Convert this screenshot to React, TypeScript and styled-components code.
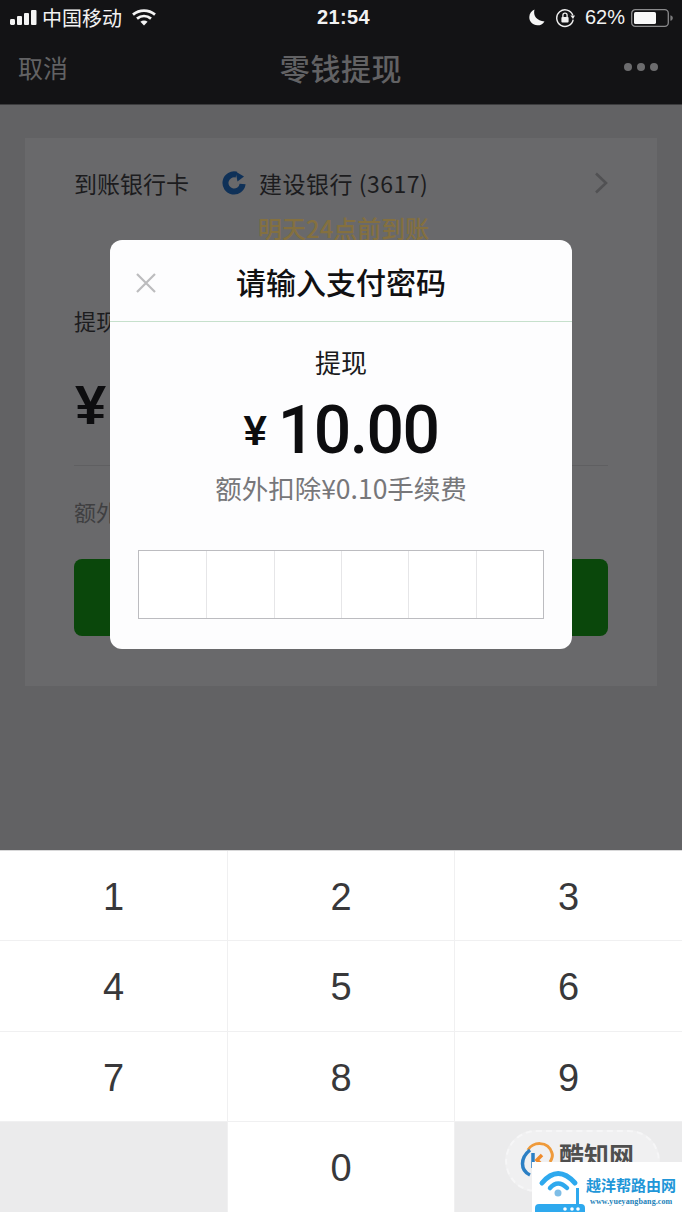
import React from "react";
import styled, { createGlobalStyle } from "styled-components";

const CN = `"Noto Sans CJK SC", "Noto Sans", "Liberation Sans", sans-serif`;

const Global = createGlobalStyle`
  html, body { margin: 0; padding: 0; background: #626264; }
  * { box-sizing: border-box; }
  body { font-family: ${CN}; }
`;

const Page = styled.div`
  position: relative;
  width: 682px;
  height: 1212px;
  overflow: hidden;
  display: flex;
  flex-direction: column;
`;

const TopBar = styled.header`
  height: 105px;
  background: #131315;
  border-bottom: 1px solid #3c3c3e;
  display: flex;
  flex-direction: column;
`;

const StatusBar = styled.div`
  height: 35px;
  padding: 0 9px 0 10px;
  display: grid;
  grid-template-columns: 1fr auto 1fr;
  align-items: center;
  color: #f2f2f2;
`;

const StatusLeft = styled.div`
  display: flex;
  align-items: center;
  gap: 5px;
  font-size: 20px;
  line-height: 24px;
`;

const StatusRight = styled.div`
  display: flex;
  align-items: center;
  justify-content: flex-end;
  gap: 10px;
  font-size: 20px;
  font-family: "Liberation Sans", sans-serif;
`;

const Percent = styled.span`
  margin-right: -4px;
`;

const Clock = styled.div`
  margin-left: 4px;
  font-family: "Liberation Sans", sans-serif;
  font-size: 20px;
  font-weight: 700;
  letter-spacing: 0.4px;
`;

const Carrier = styled.span`
  margin-right: 5px;
`;

const NavBar = styled.nav`
  flex: 1;
  display: grid;
  grid-template-columns: 1fr auto 1fr;
  align-items: center;
  padding: 0 24px 5px 18px;
  color: #626264;
`;

const NavCancel = styled.div`
  font-size: 25px;
  line-height: 34px;
`;

const NavTitle = styled.div`
  margin-left: 6px;
  font-size: 30px;
  line-height: 40px;
  font-weight: 500;
  letter-spacing: 0.6px;
`;

const NavMore = styled.div`
  display: flex;
  justify-content: flex-end;
  gap: 5px;
`;

const Dot = styled.span`
  width: 8px;
  height: 8px;
  border-radius: 50%;
  background: #6c6c6e;
`;

const Body = styled.main`
  flex: 1;
  background: #626264;
  padding: 33px 25px 0;
`;

const Card = styled.section`
  height: 548px;
  background: #69696b;
  padding: 25px 49px 0;
  display: flex;
  flex-direction: column;
`;

const BankRow = styled.div`
  display: flex;
  align-items: center;
  height: 40px;
  color: #1c1c1e;
  font-size: 23px;
`;

const BankLabel = styled.span`
  width: 148px;
`;

const BankName = styled.span`
  margin-left: 13px;
  flex: 1;
  letter-spacing: 0.5px;
`;

const Arrival = styled.div`
  margin-left: 184px;
  margin-top: 10px;
  color: #84703f;
  font-size: 24px;
  font-weight: 500;
  line-height: 30px;
`;

const WithdrawLabel = styled.div`
  margin-top: 62px;
  color: #1c1c1e;
  font-size: 22px;
  line-height: 30px;
`;

const Amount = styled.div`
  margin-top: 40px;
  margin-left: 1px;
  color: #0d0d0f;
  font-family: "Liberation Sans", sans-serif;
  font-weight: 700;
  font-size: 56px;
  line-height: 60px;
`;

const Divider = styled.div`
  margin-top: 30px;
  height: 1px;
  background: #5f5f61;
`;

const Fee = styled.div`
  margin-top: 30px;
  color: #3f3f41;
  font-size: 22px;
  line-height: 30px;
`;

const Submit = styled.div`
  margin-top: 33px;
  height: 77px;
  border-radius: 8px;
  background: #0a470b;
`;

const Keyboard = styled.div`
  height: 362px;
  background: #f0f0f1;
  border-top: 1px solid #d8d8d9;
  display: grid;
  grid-template-columns: 227px 226px 227px;
  grid-template-rows: 89px 90px 89px 1fr;
  gap: 1px;
`;

const Key = styled.div<{ $empty?: boolean }>`
  background: ${(p) => (p.$empty ? "#ebebec" : "#ffffff")};
  display: flex;
  align-items: center;
  justify-content: center;
  color: #38383a;
  font-family: "Liberation Sans", sans-serif;
  font-size: 38px;
  padding-top: 3px;
`;

const Modal = styled.div`
  position: absolute;
  left: 110px;
  top: 240px;
  width: 462px;
  height: 409px;
  border-radius: 12px;
  background: #fdfdfe;
  display: flex;
  flex-direction: column;
  align-items: center;
`;

const ModalHead = styled.div`
  position: relative;
  width: 100%;
  height: 82px;
  border-bottom: 1px solid #c6e0cc;
  display: flex;
  align-items: center;
  justify-content: center;
  font-size: 30px;
  font-weight: 500;
  color: #111113;
`;

const Close = styled.svg`
  position: absolute;
  left: 25px;
  top: 32px;
  width: 22px;
  height: 22px;
`;

const ModalSub = styled.div`
  margin-top: 23px;
  font-size: 26px;
  line-height: 34px;
  color: #1a1a1c;
`;

const ModalAmount = styled.div`
  margin-top: 16px;
  display: flex;
  align-items: center;
  color: #0d0d0f;
  font-family: "Roboto", "Liberation Sans", sans-serif;
  font-weight: 500;
  font-size: 66px;
  line-height: 72px;
  letter-spacing: -1.5px;
`;

const Yen = styled.span`
  font-family: "Liberation Sans", sans-serif;
  font-size: 42px;
  font-weight: 700;
  margin-right: 11px;
  letter-spacing: 0;
`;

const ModalFee = styled.div`
  margin-top: 3px;
  font-size: 26.5px;
  line-height: 36px;
  color: #77777a;
`;

const Pin = styled.div`
  margin-top: 44px;
  width: 406px;
  height: 69px;
  border: 1px solid #bcbcc0;
  background: #ffffff;
  display: grid;
  grid-template-columns: repeat(6, 1fr);
`;

const PinCell = styled.div`
  border-left: 1px solid #e6e6e8;
  &:first-child { border-left: 0; }
`;

const Stamp = styled.div`
  position: absolute;
  left: 505px;
  top: 1130px;
  width: 155px;
  height: 62px;
  border-radius: 31px;
  border: 2px dashed #f6f6f7;
  background: #f0f0f1;
  display: flex;
  align-items: flex-start;
  padding: 8px 0 0 13px;
  gap: 3px;
`;

const StampText = styled.span`
  font-family: "Noto Sans CJK SC", sans-serif;
  font-weight: 700;
  font-size: 25px;
  line-height: 28px;
  color: #4f4f4f;
`;

const Badge = styled.div`
  position: absolute;
  left: 532px;
  top: 1162px;
  width: 150px;
  height: 50px;
  background: #ffffff;
  display: flex;
  padding-left: 3px;
`;

const BadgeText = styled.div`
  margin-left: 1px;
  display: flex;
  flex-direction: column;
  align-items: flex-start;
`;

const BadgeTitle = styled.div`
  margin-top: 14px;
  font-family: "Noto Sans CJK SC", sans-serif;
  font-weight: 700;
  font-size: 15px;
  line-height: 18px;
  color: #2196d8;
`;

const BadgeUrl = styled.div`
  margin-top: 3px;
  margin-left: 4px;
  font-family: "Liberation Serif", serif;
  font-weight: 700;
  font-size: 8px;
  line-height: 10px;
  color: #1b7fb8;
  letter-spacing: 0.1px;
`;

const Signal = () => (
  <svg width="27" height="15" viewBox="0 0 27 15">
    <rect x="0" y="9" width="5" height="6" rx="1.4" fill="#f4f4f4" />
    <rect x="7" y="6" width="5" height="9" rx="1" fill="#f4f4f4" />
    <rect x="14" y="3" width="5" height="12" rx="1" fill="#f4f4f4" />
    <rect x="21" y="0" width="5.5" height="15" rx="1" fill="#f4f4f4" />
  </svg>
);

const Wifi = () => (
  <svg width="24" height="17" viewBox="0 0 24 17" fill="none" stroke="#f4f4f4" strokeWidth="2.8">
    <path d="M1 5.6C7.5 0.2 16.5 0.2 23 5.6" />
    <path d="M5 9.6C9.2 6.2 14.8 6.2 19 9.6" />
    <path d="M12 16.5L8.4 12.8C10.6 11.2 13.4 11.2 15.6 12.8Z" fill="#f4f4f4" stroke="none" />
  </svg>
);

const Moon = () => (
  <svg width="16" height="17" viewBox="0 0 16 17">
    <path d="M5.5 0.5C3.8 6.8 8 12 15.5 12.4C13.8 15 11.2 16.4 8.4 16.3C3.6 16.2 0.2 12.6 0.3 8.1C0.4 4.6 2.4 1.8 5.5 0.5Z" fill="#f6f6f6" />
  </svg>
);

const RotationLock = () => (
  <svg width="20" height="20" viewBox="0 0 20 20" fill="none">
    <path d="M17.8 7.2A8.3 8.3 0 1 0 18.2 11.6" stroke="#f0f0f0" strokeWidth="1.4" />
    <path d="M15.4 7.6L20 7.6L18 11Z" fill="#f0f0f0" />
    <rect x="6.4" y="9" width="7.2" height="5.6" rx="1" fill="#f0f0f0" />
    <path d="M7.9 9V7.2A2.1 2.1 0 0 1 12.1 7.2V9" stroke="#f0f0f0" strokeWidth="1.3" />
  </svg>
);

const Battery = () => (
  <svg width="42" height="18" viewBox="0 0 42 18" fill="none">
    <rect x="0.7" y="0.7" width="36.6" height="16.6" rx="3.6" stroke="#8a8a8c" strokeWidth="1.3" />
    <rect x="3" y="3" width="22" height="12" rx="1.6" fill="#f8f8f8" />
    <path d="M39.4 6.2C41 6.6 41.8 7.6 41.8 9C41.8 10.4 41 11.4 39.4 11.8Z" fill="#7a7a7c" />
  </svg>
);

const BankLogo = () => (
  <svg width="24" height="24" viewBox="0 0 24 24" fill="none">
    <path d="M20.6 13A8.6 8.6 0 1 1 14.4 3.7" stroke="#0f3158" strokeWidth="6" />
    <path d="M13.5 0.6L22 5.5L15.5 10.5Z" fill="#0f3158" />
  </svg>
);

const Chevron = () => (
  <svg width="14" height="22" viewBox="0 0 14 22" fill="none" stroke="#515153" strokeWidth="2.6">
    <path d="M2 1.5L12 11L2 20.5" />
  </svg>
);

const KzLogo = () => (
  <svg width="36" height="38" viewBox="0 0 36 38" fill="none">
    <path d="M8 10C12 2 28 0 32 13C33 16 32 19 30 22" stroke="#ef9a3a" strokeWidth="3" />
    <path d="M10 10C0 18 0 30 10 35" stroke="#2b7fc4" strokeWidth="3.5" />
    <path d="M13 13V28" stroke="#2b7fc4" strokeWidth="3.5" />
    <path d="M22 15L17 20L22 25" stroke="#ef8a2a" strokeWidth="3.5" />
  </svg>
);

const RouterLogo = () => (
  <svg width="50" height="50" viewBox="0 0 50 50" fill="none">
    <path d="M7 21Q23 2 40 21" stroke="#2ea9ee" strokeWidth="5" strokeLinecap="round" />
    <path d="M15 26Q23 17 32 26" stroke="#2ea9ee" strokeWidth="4.5" strokeLinecap="round" />
    <circle cx="23" cy="31" r="3.5" fill="#7ebde6" />
    <path d="M0 50V46Q0 42 4 42H41V26H44V42H46Q50 42 50 46V50Z" fill="#2ea9ee" />
    <circle cx="30" cy="47" r="1.8" fill="#fff" />
    <circle cx="37" cy="47" r="1.8" fill="#fff" />
    <circle cx="43" cy="47" r="1.8" fill="#fff" />
  </svg>
);

const keys = ["1", "2", "3", "4", "5", "6", "7", "8", "9", "", "0", ""];

export default function App() {
  return (
    <Page>
      <Global />
      <TopBar>
        <StatusBar>
          <StatusLeft>
            <Signal />
            <Carrier>中国移动</Carrier>
            <Wifi />
          </StatusLeft>
          <Clock>21:54</Clock>
          <StatusRight>
            <Moon />
            <RotationLock />
            <Percent>62%</Percent>
            <Battery />
          </StatusRight>
        </StatusBar>
        <NavBar>
          <NavCancel>取消</NavCancel>
          <NavTitle>零钱提现</NavTitle>
          <NavMore>
            <Dot />
            <Dot />
            <Dot />
          </NavMore>
        </NavBar>
      </TopBar>
      <Body>
        <Card>
          <BankRow>
            <BankLabel>到账银行卡</BankLabel>
            <BankLogo />
            <BankName>建设银行 (3617)</BankName>
            <Chevron />
          </BankRow>
          <Arrival>明天24点前到账</Arrival>
          <WithdrawLabel>提现金额</WithdrawLabel>
          <Amount>¥</Amount>
          <Divider />
          <Fee>额外扣除手续费</Fee>
          <Submit />
        </Card>
      </Body>
      <Keyboard>
        {keys.map((k, i) => (
          <Key key={i} $empty={k === ""}>
            {k}
          </Key>
        ))}
      </Keyboard>
      <Modal>
        <ModalHead>
          <Close viewBox="0 0 22 22" fill="none" stroke="#bcbcbe" strokeWidth="2.2">
            <path d="M2 2L20 20M20 2L2 20" />
          </Close>
          请输入支付密码
        </ModalHead>
        <ModalSub>提现</ModalSub>
        <ModalAmount>
          <Yen>¥</Yen>10.00
        </ModalAmount>
        <ModalFee>额外扣除¥0.10手续费</ModalFee>
        <Pin>
          {[0, 1, 2, 3, 4, 5].map((i) => (
            <PinCell key={i} />
          ))}
        </Pin>
      </Modal>
      <Stamp>
        <KzLogo />
        <StampText>酷知网</StampText>
      </Stamp>
      <Badge>
        <RouterLogo />
        <BadgeText>
          <BadgeTitle>越洋帮路由网</BadgeTitle>
          <BadgeUrl>www.yueyangbang.com</BadgeUrl>
        </BadgeText>
      </Badge>
    </Page>
  );
}
